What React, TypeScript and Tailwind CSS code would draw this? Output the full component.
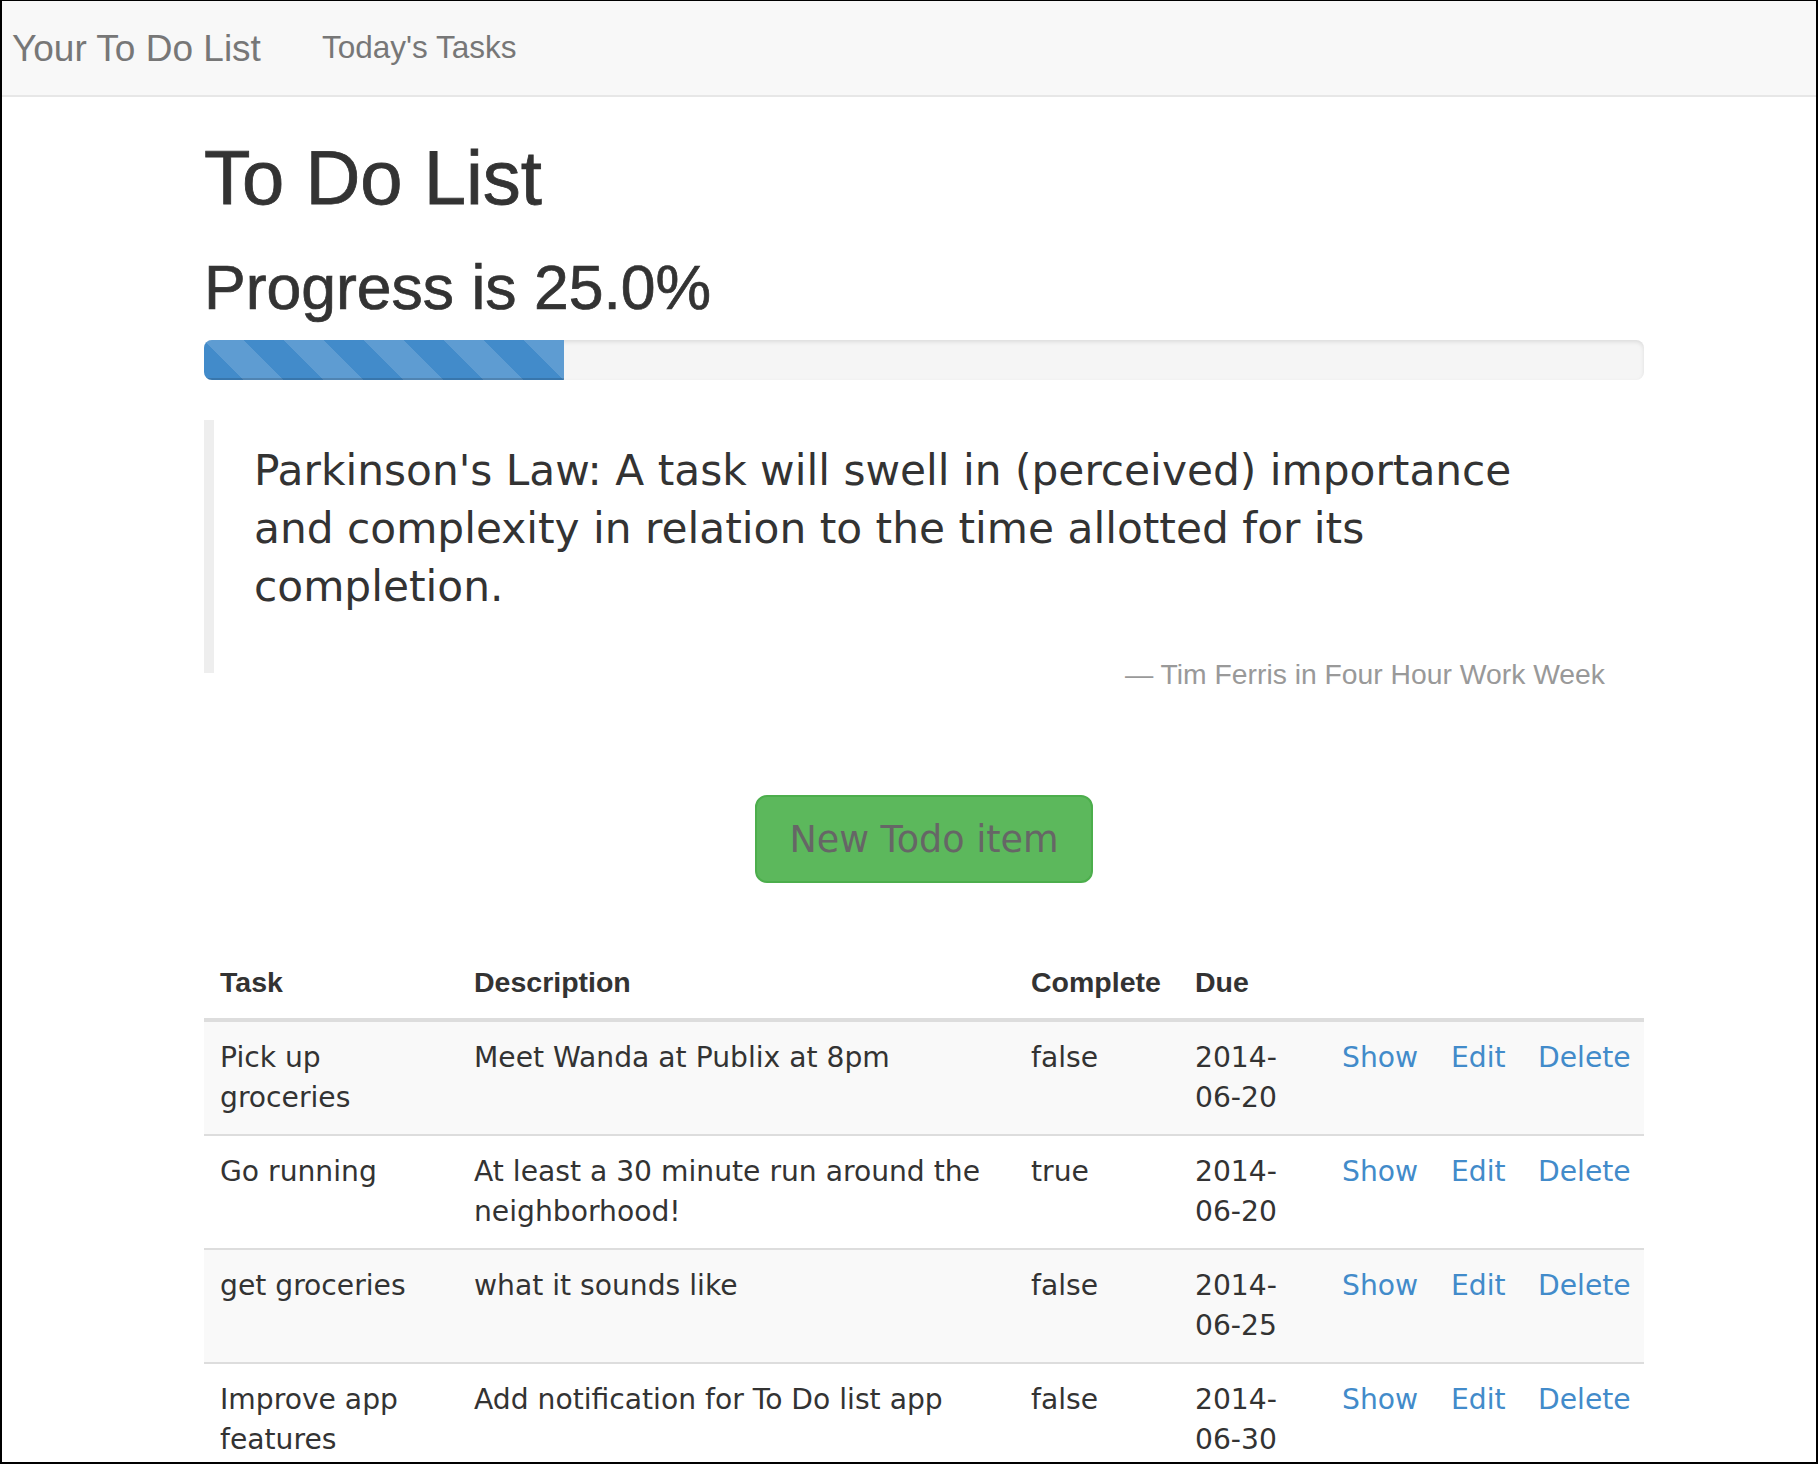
import React from 'react';

type Todo = {
  task: string;
  description: string;
  complete: boolean;
  due: [string, string];
};

const todos: Todo[] = [
  { task: 'Pick up groceries', description: 'Meet Wanda at Publix at 8pm', complete: false, due: ['2014-', '06-20'] },
  { task: 'Go running', description: 'At least a 30 minute run around the neighborhood!', complete: true, due: ['2014-', '06-20'] },
  { task: 'get groceries', description: 'what it sounds like', complete: false, due: ['2014-', '06-25'] },
  { task: 'Improve app features', description: 'Add notification for To Do list app', complete: false, due: ['2014-', '06-30'] },
];

const helv = "font-['Liberation_Sans',Arial,sans-serif]";
const verdana = "font-['DejaVu_Sans',Verdana,sans-serif]";

const Navbar = () => (
  <nav className={`flex h-[96px] items-center gap-[61px] border-b-2 border-[#e7e7e7] bg-[#f8f8f8] pl-[10px] ${helv}`}>
    <a className="text-[37px] leading-none text-[#777]">Your To Do List</a>
    <a className="text-[31.5px] leading-none text-[#777]">Today's Tasks</a>
  </nav>
);

const ProgressBar = ({ percent }: { percent: number }) => (
  <div className="h-[40px] w-full overflow-hidden rounded-[8px] bg-[#f5f5f5] shadow-[inset_0_2px_4px_rgba(0,0,0,0.1)]">
    <div
      className="h-full bg-[#428bca] bg-[linear-gradient(45deg,rgba(255,255,255,.15)_25%,transparent_25%,transparent_50%,rgba(255,255,255,.15)_50%,rgba(255,255,255,.15)_75%,transparent_75%,transparent)] bg-[length:80px_80px] shadow-[inset_0_-2px_0_rgba(0,0,0,0.15)]"
      style={{ width: `${percent}%` }}
    />
  </div>
);

const TodoTable = () => (
  <table className="w-[1440px] table-fixed border-collapse text-[#333]">
    <colgroup>
      <col className="w-[254px]" />
      <col className="w-[557px]" />
      <col className="w-[164px]" />
      <col className="w-[147px]" />
      <col className="w-[109px]" />
      <col className="w-[87px]" />
      <col className="w-[122px]" />
    </colgroup>
    <thead>
      <tr className={`border-b-4 border-[#ddd] text-left text-[28.5px] leading-[40px] font-bold ${helv}`}>
        <th className="p-[16px] align-bottom">Task</th>
        <th className="p-[16px] align-bottom">Description</th>
        <th className="p-[16px] align-bottom">Complete</th>
        <th className="p-[16px] align-bottom">Due</th>
        <th className="p-[16px]" />
        <th className="p-[16px]" />
        <th className="p-[16px]" />
      </tr>
    </thead>
    <tbody className={`text-[28.2px] leading-[40px] ${verdana}`}>
      {todos.map((todo, i) => (
        <tr key={todo.task} className={`border-t-2 border-[#ddd] ${i % 2 === 0 ? 'bg-[#f9f9f9]' : 'bg-white'}`}>
          <td className="p-[16px] align-top">{todo.task}</td>
          <td className="p-[16px] align-top">{todo.description}</td>
          <td className="p-[16px] align-top">{todo.complete ? 'true' : 'false'}</td>
          <td className="p-[16px] align-top">
            {todo.due[0]}
            <wbr />
            {todo.due[1]}
          </td>
          <td className="p-[16px] align-top"><a className="text-[#428bca]">Show</a></td>
          <td className="p-[16px] align-top"><a className="text-[#428bca]">Edit</a></td>
          <td className="p-[16px] align-top"><a className="text-[#428bca]">Delete</a></td>
        </tr>
      ))}
    </tbody>
  </table>
);

export default function App() {
  return (
    <div className="h-[1464px] w-[1818px] overflow-hidden border-2 border-t border-black bg-white">
      <Navbar />
      <main className="ml-[202px] flex w-[1440px] flex-col">
        <h1 className={`mt-[40px] text-[76px] leading-[81px] text-[#333] [-webkit-text-stroke:0.8px_#333] ${helv}`}>To Do List</h1>
        <h2 className={`mt-[36px] text-[62.5px] leading-[66px] text-[#333] [-webkit-text-stroke:0.7px_#333] ${helv}`}>Progress is 25.0%</h2>
        <div className="mt-[20px]">
          <ProgressBar percent={25} />
        </div>
        <blockquote className="mt-[40px] border-l-[10px] border-[#eee] pt-[22px] pr-[64px] pb-[57px] pl-[40px]">
          <p className={`text-[42.3px] leading-[58px] text-[#333] ${verdana}`}>
            Parkinson's Law: A task will swell in (perceived) importance and complexity in relation to the time allotted for its completion.
          </p>
        </blockquote>
        <div className={`-mt-[19px] pr-[39px] text-right text-[28.3px] leading-[40px] text-[#999] ${helv}`}>
          — Tim Ferris in Four Hour Work Week
        </div>
        <div className="mt-[101px] flex justify-center">
          <button className={`flex h-[88px] w-[338px] items-center justify-center rounded-[12px] border-2 border-[#4cae4c] bg-[#5cb85c] pt-[3px] text-[36.5px] text-[#666] ${verdana}`}>
            New Todo item
          </button>
        </div>
        <div className="mt-[63px]">
          <TodoTable />
        </div>
      </main>
    </div>
  );
}
